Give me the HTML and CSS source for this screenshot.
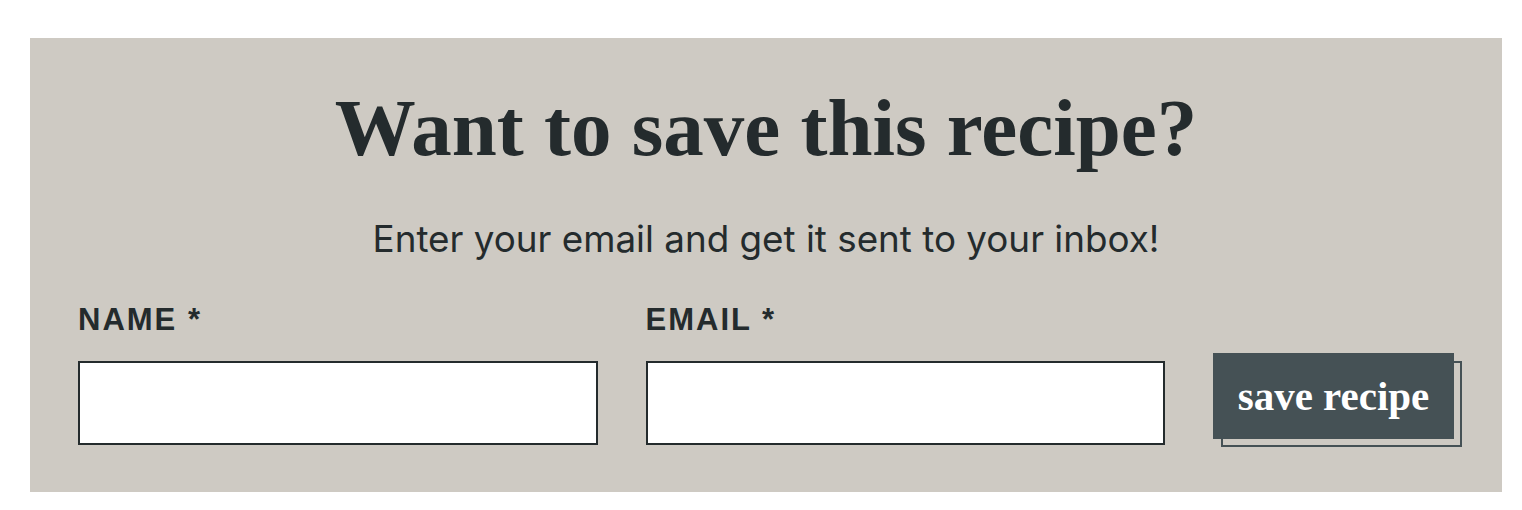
FILE: index.html
```html
<!DOCTYPE html>
<html>
<head>
<meta charset="utf-8">
<link rel="stylesheet" href="styles.css">
</head>
<body>
<section class="optin">
  <h2 class="title">Want to save this recipe?</h2>
  <p class="subtitle">Enter your email and get it sent to your inbox!</p>
  <form class="form">
    <label class="field">
      <span class="label">NAME *</span>
      <input class="input" type="text">
    </label>
    <label class="field">
      <span class="label">EMAIL *</span>
      <input class="input" type="email">
    </label>
    <div class="btn-wrap">
      <button class="btn" type="button">save recipe</button>
    </div>
  </form>
</section>
</body>
</html>
```
FILE: styles.css
```css
html, body {
  margin: 0;
  padding: 0;
  background: #ffffff;
}
body {
  padding: 38px 20px 18px 30px;
}
.optin {
  width: 1472px;
  height: 454px;
  box-sizing: border-box;
  background: #cecac3;
  color: #242b2d;
  padding: 50px 48px 0 48px;
}
.title {
  margin: 0;
  text-align: center;
  font-family: "Liberation Serif", "DejaVu Serif", serif;
  font-weight: 700;
  font-size: 81px;
  line-height: 80px;
}
.subtitle {
  margin: 49px 0 0 0;
  text-align: center;
  font-family: Inter, "Noto Sans", sans-serif;
  font-size: 36.8px;
  line-height: 44px;
}
.form {
  display: flex;
  align-items: flex-start;
  gap: 48px;
  margin-top: 44px;
}
.field {
  flex: 1;
  display: flex;
  flex-direction: column;
}
.label {
  font-family: "Liberation Sans", Arial, sans-serif;
  font-weight: 700;
  font-size: 31px;
  letter-spacing: 2px;
  line-height: 30px;
  margin-bottom: 26px;
}
.input {
  height: 84px;
  box-sizing: border-box;
  border: 2px solid #242b2d;
  border-radius: 0;
  background: #ffffff;
  margin: 0;
  padding: 0 16px;
}
.btn-wrap {
  position: relative;
  width: 241px;
  flex: none;
  margin-top: 48px;
}
.btn-wrap::before {
  content: "";
  position: absolute;
  left: 8px;
  top: 8px;
  width: 241px;
  height: 86px;
  box-sizing: border-box;
  border: 2px solid #455155;
}
.btn {
  position: relative;
  display: block;
  width: 241px;
  height: 86px;
  border: 0;
  background: #455155;
  color: #ffffff;
  font-family: "Liberation Serif", "DejaVu Serif", serif;
  font-weight: 700;
  font-size: 41px;
  padding: 0;
  cursor: pointer;
}
```
